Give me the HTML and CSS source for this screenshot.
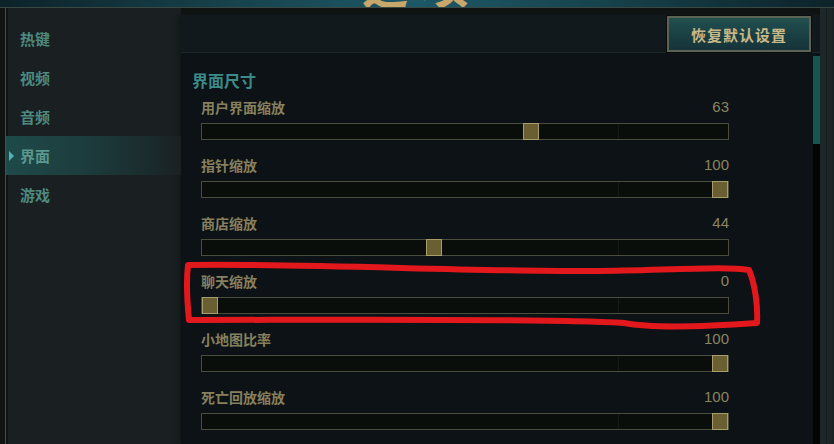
FILE: index.html
```html
<!DOCTYPE html>
<html lang="zh-CN">
<head>
    <meta charset="UTF-8">
    <meta name="viewport" content="width=device-width, initial-scale=1.0">
    <title>选项 - 界面</title>
    <link rel="stylesheet" href="styles.css">
</head>
<body>
    <!-- Title banner (only its lower edge is visible) -->
    <header class="banner">
        <span class="banner-title">选项</span>
    </header>

    <div class="frame">
        <!-- Left menu -->
        <nav class="sidebar">
            <a class="nav-item">热键</a>
            <a class="nav-item">视频</a>
            <a class="nav-item">音频</a>
            <a class="nav-item active">界面</a>
            <a class="nav-item">游戏</a>
        </nav>

        <!-- Settings panel -->
        <main class="panel">
            <div class="panel-head">
                <button class="reset-btn">恢复默认设置</button>
            </div>
            <div class="panel-body">
                <div class="content">
                    <h3 class="section-title">界面尺寸</h3>
                    <div id="sliders"></div>
                </div>
                <div class="scrollbar"><div class="scroll-thumb"></div></div>
            </div>
        </main>

        <div class="rail"></div>
    </div>

    <!-- Red annotation drawn over the screenshot -->
    <svg class="annotation" width="834" height="444" viewBox="0 0 834 444">
        <path d="M188,265 C300,263 480,272 600,271 C680,270 725,266 749,270 C755,284 758,306 757,323 C700,327 650,328 624,323 C560,318 300,320 189,320 C187,300 186,282 188,265 Z"
              fill="none" stroke="#e3181d" stroke-width="6" stroke-linejoin="round" stroke-linecap="round"/>
    </svg>

    <script>
        // Slider settings for the interface size section
        const settings = [
            { label: '用户界面缩放', value: 63 },
            { label: '指针缩放', value: 100 },
            { label: '商店缩放', value: 44 },
            { label: '聊天缩放', value: 0 },
            { label: '小地图比率', value: 100 },
            { label: '死亡回放缩放', value: 100 }
        ];
        const list = document.getElementById('sliders');

        settings.forEach(item => {
            const row = document.createElement('div');
            row.classList.add('slider-row');
            row.innerHTML = `
                <div class="slider-label">
                    <span>${item.label}</span>
                    <span class="slider-value">${item.value}</span>
                </div>
                <div class="track">
                    <div class="track-mark"></div>
                    <div class="thumb" style="left: calc((100% - 16px) * ${item.value / 100})"></div>
                </div>
            `;
            list.appendChild(row);
        });
    </script>
</body>
</html>
```

FILE: styles.css
```css
/* Global Styles */
body {
    margin: 0;
    width: 834px;
    height: 444px;
    overflow: hidden;
    position: relative;
    background-color: #11171a;
    font-family: 'Noto Sans CJK SC', 'Noto Sans', sans-serif;
}

/* Banner */
.banner {
    height: 7px;
    overflow: hidden;
    text-align: center;
    background: linear-gradient(90deg, #0d2229 0%, #17454f 30%, #1d5866 50%, #17454f 70%, #0d2229 100%);
    border-bottom: 1px solid #3a4842;
}

.banner-title {
    display: block;
    margin-top: -40px;
    padding-left: 10px;
    font-size: 46px;
    line-height: 46px;
    font-weight: 900;
    letter-spacing: 14px;
    color: #c9a66a;
}

/* Frame */
.frame {
    display: flex;
    height: 436px;
    padding-left: 5px;
    background-color: #0f1412;
}

/* Sidebar */
.sidebar {
    width: 175px;
    flex-shrink: 0;
    padding-top: 11px;
    border-left: 1px solid #355656;
    background-color: #1a2022;
    box-shadow: inset 2px 0 0 #0f1412;
}

.nav-item {
    display: block;
    position: relative;
    height: 39px;
    line-height: 39px;
    padding-left: 14px;
    font-size: 15px;
    font-weight: 700;
    color: #4d8a80;
}

.nav-item.active {
    background: linear-gradient(90deg, #1f4a4a 0%, #1d3c3d 45%, #1a2a2c 85%, #1a2022 100%);
    color: #5a978c;
}

.nav-item.active::before {
    content: "";
    position: absolute;
    left: 3px;
    top: 15px;
    border-top: 5px solid transparent;
    border-bottom: 5px solid transparent;
    border-left: 5px solid #4fb3b3;
}

/* Panel */
.panel {
    flex: 1;
    margin-top: 7px;
    display: flex;
    flex-direction: column;
    background-color: #0c1215;
    box-shadow: -3px 0 4px #12181a;
}

.panel-head {
    height: 38px;
    display: flex;
    justify-content: flex-end;
    align-items: center;
    padding-right: 9px;
    background-color: #11191c;
    border-bottom: 1px solid #1c272a;
}

.reset-btn {
    width: 144px;
    height: 36px;
    margin-top: 1px;
    background: linear-gradient(180deg, #21504f 0%, #1a3f42 55%, #15343a 100%);
    border: 2px solid #5c6254;
    box-shadow: 0 0 0 1px #0a0e0f;
    color: #c8b888;
    font-family: 'Noto Sans CJK SC', sans-serif;
    font-size: 15px;
    font-weight: 700;
    letter-spacing: 1px;
    cursor: pointer;
}

.panel-body {
    flex: 1;
    display: flex;
}

.content {
    flex: 1;
    padding: 18px 84px 0 11px;
}

.section-title {
    margin: 0 0 9px;
    font-size: 16px;
    line-height: 18px;
    font-weight: 700;
    color: #3c8b88;
}

/* Slider rows */
.slider-row {
    padding-left: 9px;
    margin-bottom: 16px;
}

.slider-label {
    display: flex;
    justify-content: space-between;
    height: 18px;
    line-height: 18px;
    margin-bottom: 7px;
    font-size: 14px;
    font-weight: 700;
    color: #86805e;
}

.slider-value {
    font-family: 'Liberation Sans Narrow', 'Liberation Sans', sans-serif;
    font-size: 15px;
    font-weight: 400;
    color: #8a8462;
}

.track {
    position: relative;
    height: 15px;
    border: 1px solid #4a4c3d;
    background-color: #090e0b;
}

.track-mark {
    position: absolute;
    left: 79%;
    top: 0;
    bottom: 0;
    width: 1px;
    background-color: #141a16;
}

.thumb {
    position: absolute;
    top: -1px;
    width: 14px;
    height: 15px;
    border: 1px solid #a79d6c;
    background-color: #6a5f31;
}

/* Scrollbar */
.scrollbar {
    width: 7px;
    margin-top: 3px;
    background-color: #030505;
}

.scroll-thumb {
    height: 88px;
    background-color: #15564d;
}

/* Right frame */
.rail {
    width: 14px;
    flex-shrink: 0;
    background: linear-gradient(90deg, #1d2628 0%, #1d2628 40%, #141b1d 45%, #1f2829 55%, #1a2123 100%);
}

/* Annotation */
.annotation {
    position: absolute;
    left: 0;
    top: 0;
    pointer-events: none;
}
```
